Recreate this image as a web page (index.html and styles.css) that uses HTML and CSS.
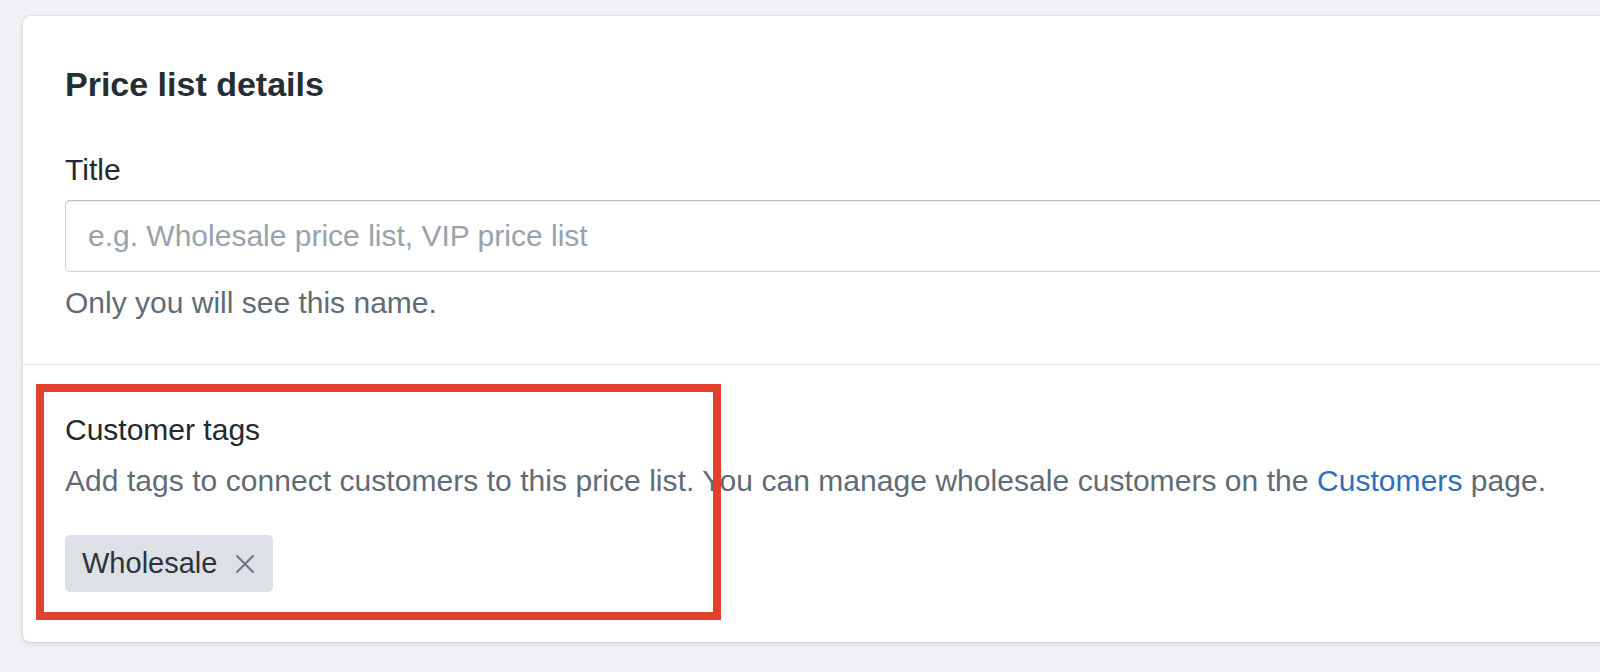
FILE: index.html
```html
<!DOCTYPE html>
<html lang="en">
<head>
<meta charset="utf-8">
<title>Price list details</title>
<link rel="stylesheet" href="styles.css">
</head>
<body>
<div class="page">
  <div class="card">
    <section class="section">
      <h2 class="heading">Price list details</h2>
      <label class="label" for="title">Title</label>
      <div class="input"><span class="placeholder">e.g. Wholesale price list, VIP price list</span></div>
      <p class="help">Only you will see this name.</p>
    </section>
    <section class="section section-tags">
      <div class="label">Customer tags</div>
      <p class="help desc">Add tags to connect customers to this price list. You can manage wholesale customers on the <a class="link" href="#">Customers</a> page.</p>
      <div class="tags">
        <span class="tag">Wholesale
          <svg class="tag-x" viewBox="0 0 20 20" width="20" height="20" aria-hidden="true"><path d="M2 2 L18 18 M18 2 L2 18" stroke="#6b7785" stroke-width="2" fill="none" stroke-linecap="round"/></svg>
        </span>
      </div>
    </section>
    <div class="annotation"></div>
  </div>
</div>
</body>
</html>
```

FILE: styles.css
```css
html, body {
  margin: 0;
  padding: 0;
  background: #f1f1f5;
  height: 100%;
  overflow: hidden;
}
.page {
  padding: 16px 0 0 23px;
  font-family: "Liberation Sans", Arial, sans-serif;
  color: #2a3138;
}
.card {
  position: relative;
  margin-right: -60px;
  background: #ffffff;
  border-radius: 7px;
  box-shadow: 0 0 0 1px rgba(63, 63, 68, 0.06), 0 2px 5px rgba(63, 63, 68, 0.14);
}
.section {
  padding: 48px 42px 41px 42px;
}
.heading {
  margin: 0;
  font-size: 34px;
  line-height: 40px;
  font-weight: 700;
  color: #262d33;
}
.label {
  display: block;
  margin-top: 46px;
  font-size: 30px;
  line-height: 40px;
  color: #22292f;
}
.input {
  margin-top: 10px;
  height: 70px;
  border: 1px solid #c9cfd5;
  border-top-color: #b3bcc4;
  border-radius: 5px 0 0 5px;
  box-shadow: inset 0 1px 0 rgba(99, 115, 129, 0.08);
  display: flex;
  align-items: center;
  padding-left: 22px;
}
.placeholder {
  font-size: 30px;
  color: #98a2ad;
}
.help {
  margin: 11px 0 0;
  font-size: 30px;
  line-height: 40px;
  color: #5f6b76;
}
.section-tags {
  border-top: 1px solid #e3e6ea;
  padding: 45px 42px 50px 42px;
}
.section-tags .label {
  margin-top: 0;
}
.desc {
  margin-top: 11px;
  letter-spacing: 0.05px;
}
.link {
  color: #2f6fb7;
  text-decoration: none;
}
.tags {
  margin-top: 34px;
  display: flex;
}
.tag {
  display: inline-flex;
  align-items: center;
  gap: 18px;
  height: 57px;
  padding: 0 18px 0 17px;
  background: #dde1e6;
  border-radius: 5px;
  font-size: 29px;
  color: #2c343b;
}
.tag-x {
  width: 20px;
  height: 20px;
}
.annotation {
  position: absolute;
  left: 13px;
  top: 368px;
  width: 669px;
  height: 220px;
  border: 8px solid #e3402f;
  pointer-events: none;
}
```
